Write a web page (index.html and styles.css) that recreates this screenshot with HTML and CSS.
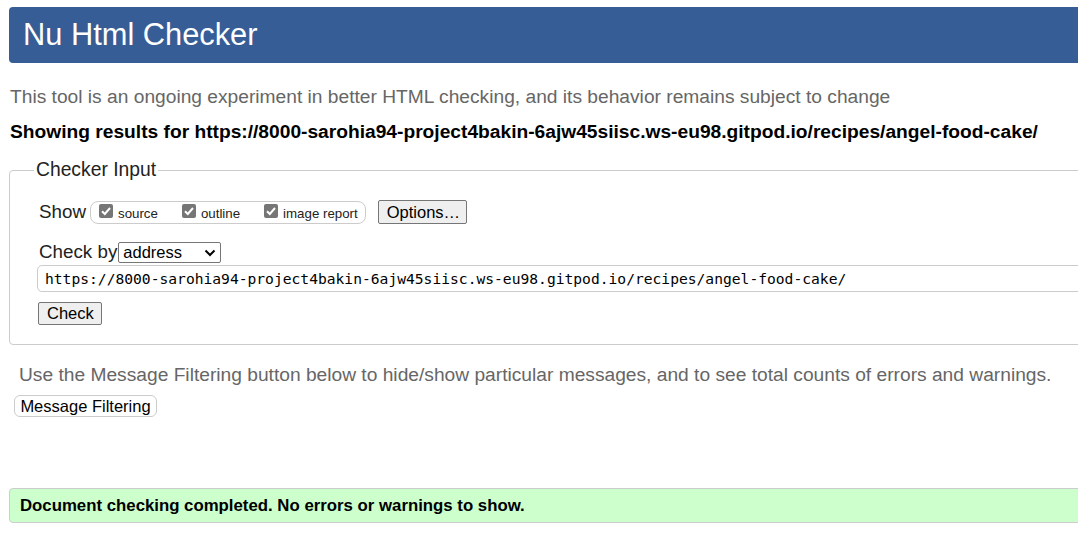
FILE: index.html
```html
<!DOCTYPE html>
<html lang="en">
<head>
<meta charset="utf-8">
<title>Nu Html Checker</title>
<link rel="stylesheet" href="styles.css">
</head>
<body>
<div class="page">
  <h1 class="banner">Nu Html Checker</h1>
  <p class="intro">This tool is an ongoing experiment in better HTML checking, and its behavior remains subject to change</p>
  <p class="results-for">Showing results for https://8000-sarohia94-project4bakin-6ajw45siisc.ws-eu98.gitpod.io/recipes/angel-food-cake/</p>

  <fieldset class="input-box">
    <legend class="legend">Checker Input</legend>
    <div class="row show-row">
      <span class="row-label">Show</span>
      <div class="show-group">
        <label class="opt"><span class="cb"><svg viewBox="0 0 14 14" width="14" height="14"><polyline points="3,7.2 5.8,10 11,4" fill="none" stroke="#fff" stroke-width="2"/></svg></span><span class="opt-text">source</span></label>
        <label class="opt"><span class="cb"><svg viewBox="0 0 14 14" width="14" height="14"><polyline points="3,7.2 5.8,10 11,4" fill="none" stroke="#fff" stroke-width="2"/></svg></span><span class="opt-text">outline</span></label>
        <label class="opt"><span class="cb"><svg viewBox="0 0 14 14" width="14" height="14"><polyline points="3,7.2 5.8,10 11,4" fill="none" stroke="#fff" stroke-width="2"/></svg></span><span class="opt-text">image report</span></label>
      </div>
      <button class="btn options-btn" type="button">Options…</button>
    </div>
    <div class="row checkby-row">
      <span class="row-label">Check by</span>
      <span class="select">address<svg class="chev" viewBox="0 0 12 8" width="12" height="8"><polyline points="1.5,1.5 6,6 10.5,1.5" fill="none" stroke="#000" stroke-width="2"/></svg></span>
    </div>
    <div class="url-field">https://8000-sarohia94-project4bakin-6ajw45siisc.ws-eu98.gitpod.io/recipes/angel-food-cake/</div>
    <button class="btn check-btn" type="button">Check</button>
  </fieldset>

  <p class="filter-note">Use the Message Filtering button below to hide/show particular messages, and to see total counts of errors and warnings.</p>
  <button class="filter-btn" type="button">Message Filtering</button>

  <div class="success">Document checking completed. No errors or warnings to show.</div>
</div>
</body>
</html>
```
FILE: styles.css
```css
html, body {
  margin: 0;
  padding: 0;
  overflow: hidden;
  background: #fff;
}
body {
  font-family: "Liberation Sans", Arial, sans-serif;
  color: #000;
}
.page {
  width: 1110px;
  padding: 7px 0 0 9px;
}
.banner {
  margin: 0;
  height: 56px;
  line-height: 56px;
  padding-left: 14px;
  background: #365d95;
  color: #fff;
  font-size: 30.8px;
  font-weight: normal;
  border-radius: 4px;
}
.intro {
  margin: 23px 0 0 1px;
  font-size: 19.2px;
  line-height: 22px;
  color: #666;
  white-space: nowrap;
}
.results-for {
  margin: 13px 0 0 1px;
  font-size: 19.2px;
  line-height: 22px;
  font-weight: bold;
  color: #000;
  white-space: nowrap;
}
.input-box {
  margin: 16px 0 0 0;
  border: 1px solid #ccc;
  border-radius: 4px;
  padding: 19px 0 19px 29px;
  min-width: 0;
}
.legend {
  margin-left: -5px;
  padding: 0 2px;
  font-size: 19.3px;
  line-height: 22px;
  color: #222;
}
.row {
  display: flex;
  align-items: center;
}
.row-label {
  font-size: 18.8px;
  line-height: 22px;
  color: #222;
}
.show-row {
  height: 24px;
}
.show-group {
  display: flex;
  align-items: center;
  margin-left: 4px;
  height: 21px;
  padding: 0 7px 0 8px;
  border: 1px solid #ccc;
  border-radius: 8px;
  gap: 24px;
}
.opt {
  display: flex;
  align-items: center;
}
.cb {
  display: inline-flex;
  width: 14px;
  height: 14px;
  background: #767676;
  border-radius: 2px;
  margin-top: -3px;
}
.opt-text {
  font-size: 13.3px;
  margin-left: 5px;
  margin-top: 3px;
  color: #222;
}
.btn {
  font-family: "Liberation Sans", Arial, sans-serif;
  font-size: 16.5px;
  background: #efefef;
  border: 1px solid #767676;
  border-radius: 2px;
  color: #000;
  padding: 0 8px;
  height: 24px;
}
.options-btn {
  margin-left: 12px;
  width: 89px;
}
.checkby-row {
  margin-top: 17px;
  height: 22px;
}
.select {
  display: inline-flex;
  align-items: center;
  justify-content: space-between;
  margin-left: 1px;
  width: 103px;
  height: 21px;
  box-sizing: border-box;
  border: 1px solid #767676;
  border-radius: 2px;
  padding: 0 4px 0 4px;
  font-size: 16.5px;
}
.chev {
  margin-top: 1px;
}
.url-field {
  margin: 2px 0 0 -2px;
  height: 25px;
  line-height: 25px;
  border: 1px solid #ccc;
  border-radius: 5px;
  padding-left: 7px;
  font-family: "DejaVu Sans Mono", "Liberation Mono", monospace;
  font-size: 14.63px;
  color: #000;
  white-space: nowrap;
}
.check-btn {
  display: block;
  margin: 10px 0 0 -1px;
  width: 64px;
  height: 23px;
}
.filter-note {
  margin: 19px 0 0 10px;
  font-size: 19.2px;
  line-height: 22px;
  color: #666;
  white-space: nowrap;
}
.filter-btn {
  display: block;
  margin: 9px 0 0 5px;
  font-family: "Liberation Sans", Arial, sans-serif;
  font-size: 16.5px;
  height: 22px;
  width: 143px;
  padding: 0;
  background: #fff;
  border: 1px solid #ccc;
  border-radius: 6px;
  color: #000;
}
.success {
  margin-top: 71px;
  height: 35px;
  line-height: 33px;
  box-sizing: border-box;
  padding-left: 10px;
  background: #ccffcc;
  border: 1px solid #ccc;
  border-radius: 4px;
  font-size: 16.8px;
  font-weight: bold;
  color: #000;
}
```
